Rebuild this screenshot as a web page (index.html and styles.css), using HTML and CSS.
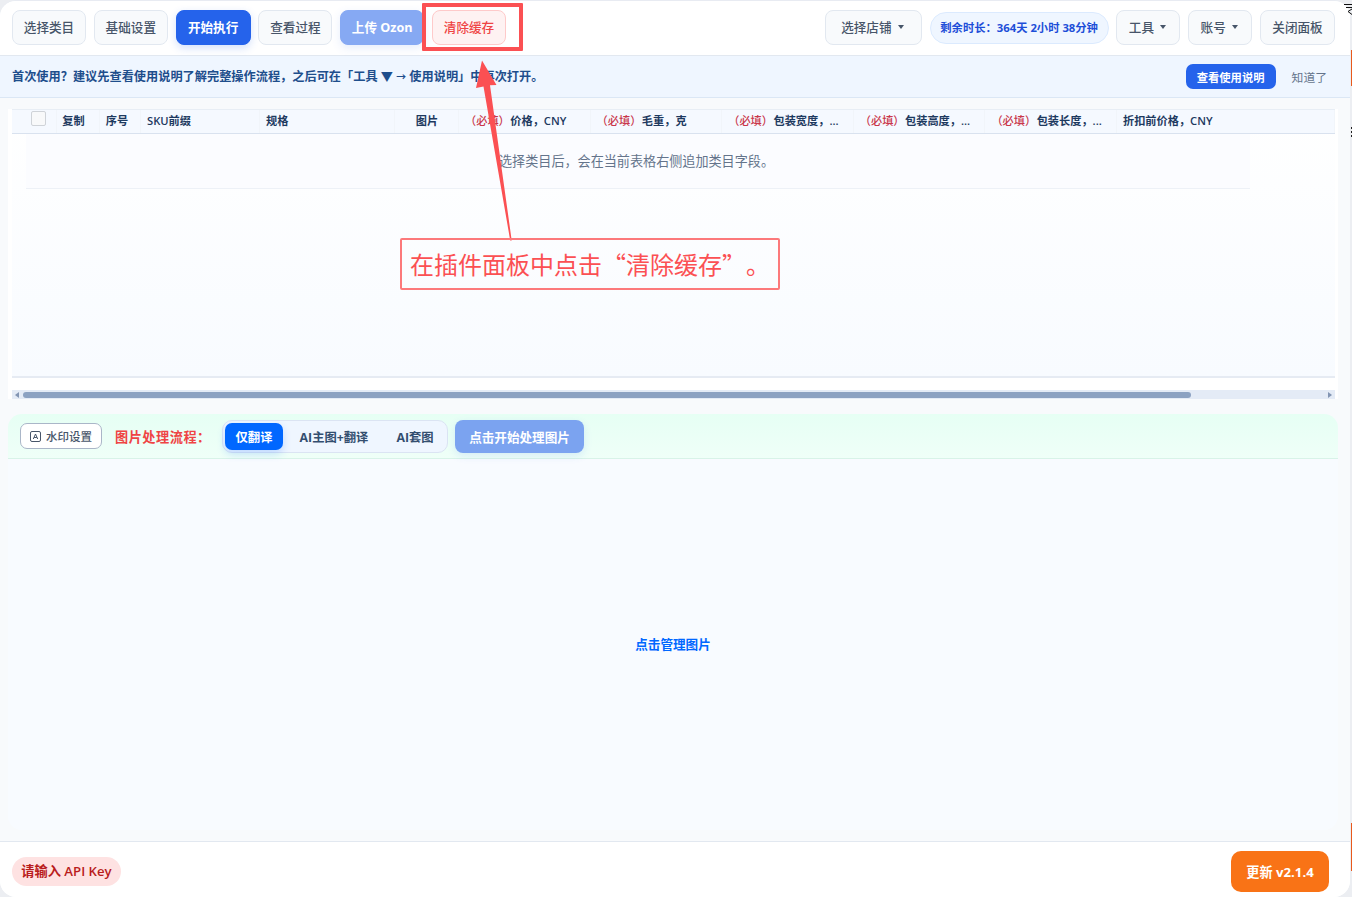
FILE: index.html
```html
<!DOCTYPE html>
<html lang="zh-CN">
<head>
  <meta charset="UTF-8">
  <meta name="viewport" content="width=device-width, initial-scale=1.0">
  <title>Ozon 插件面板</title>
  <link rel="stylesheet" href="styles.css">
</head>
<body>

<span class="edge edge-top"></span>
<span class="edge edge-bottom"></span>
<svg class="edge-mark" width="8" height="12" viewBox="0 0 8 12" fill="none" stroke="#111"><path d="M0 1.500h8M2 4.500h6M8 6 4 8.500l4 3"/></svg>
<span class="edge-dots"></span>

<div class="panel">
  <header class="toolbar">
    <div class="tools">
      <button class="btn">选择类目</button>
      <button class="btn">基础设置</button>
      <button class="btn btn-primary">开始执行</button>
      <button class="btn">查看过程</button>
      <button class="btn btn-primary btn-disabled">上传 Ozon</button>
      <button class="btn btn-danger">清除缓存</button>
    </div>
    <div class="tools">
      <button class="btn btn-drop btn-shop">选择店铺 <i class="caret"></i></button>
      <span class="remain">剩余时长：364天 2小时 38分钟</span>
      <button class="btn btn-drop">工具 <i class="caret"></i></button>
      <button class="btn btn-drop">账号 <i class="caret"></i></button>
      <button class="btn btn-close">关闭面板</button>
    </div>
  </header>

  <div class="notice">
    <span class="notice-text">首次使用？建议先查看使用说明了解完整操作流程，之后可在「工具 ▼ <small>→</small> 使用说明」中再次打开。</span>
    <button class="notice-open">查看使用说明</button>
    <button class="notice-ok">知道了</button>
  </div>

  <main class="content">
    <section class="sheet">
      <div class="sheet-body">
        <div class="sheet-head">
          <span class="center"><i class="checkbox"></i></span>
          <span class="center low copy">复制</span>
          <span class="center low">序号</span>
          <span>SKU前缀</span>
          <span class="low">规格</span>
          <span class="center low pic">图片</span>
          <span><em>（必填）</em>价格，CNY</span>
          <span><em>（必填）</em>毛重，克</span>
          <span><em>（必填）</em>包装宽度，...</span>
          <span><em>（必填）</em>包装高度，...</span>
          <span><em>（必填）</em>包装长度，...</span>
          <span>折扣前价格，CNY</span>
        </div>
        <div class="sheet-empty">选择类目后，会在当前表格右侧追加类目字段。</div>
      </div>
      <div class="scrollbar">
        <svg width="4" height="6" viewBox="0 0 4 6"><path d="M4 0v6L0 3z"/></svg>
        <div class="track"><div class="thumb"></div></div>
        <svg width="4" height="6" viewBox="0 0 4 6"><path d="M0 0v6l4-3z"/></svg>
      </div>
    </section>

    <section class="images">
      <div class="flow">
        <button class="watermark">
          <svg width="11" height="11" viewBox="0 0 11 11" fill="none" stroke="#475569"><rect x=".5" y=".5" width="10" height="10" rx="1.500"/><path d="M3.300 8 5.500 3l2.200 5M4.100 6.500h2.800"/></svg>
          水印设置
        </button>
        <span class="flow-label">图片处理流程：</span>
        <div class="tabs">
          <button class="tab active">仅翻译</button>
          <button class="tab tab-wide">AI主图+翻译</button>
          <button class="tab tab-last">AI套图</button>
        </div>
        <button class="start">点击开始处理图片</button>
      </div>
      <div class="gallery"><a class="manage">点击管理图片</a></div>
    </section>
  </main>

  <footer class="footer">
    <span class="api-key">请输入 API Key</span>
    <button class="update">更新 v2.1.4</button>
  </footer>
</div>

<!-- 操作提示 -->
<div class="mark"></div>
<svg class="arrow" width="40" height="182" viewBox="0 0 40 182"><path d="M7 .5 21.500 25l-6.500.3L36.700 180.500h-1.500L8.500 26.500 1 28z"/></svg>
<div class="tip">在插件面板中点击“清除缓存”。</div>

</body>
</html>
```
FILE: styles.css
```css
:root {
  --primary: #2563eb;
  --line: #e2e8f0;
  --text: #475569;
  --mark: #fb5053;
}

* {
  box-sizing: border-box;
}

body {
  margin: 0;
  height: 897px;
  position: relative;
  overflow: hidden;
  background: #eceef2;
  font-family: "Open Sans", "Noto Sans CJK SC", sans-serif;
  font-size: 12.6px;
  color: var(--text);
  text-spacing-trim: space-all;
}

button {
  margin: 0;
  padding: 0;
  font: inherit;
  color: inherit;
  border: 1px solid var(--line);
  background: #f8fafc;
  white-space: nowrap;
  text-spacing-trim: space-all;
}

.panel {
  width: 1350px;
  height: 897px;
  display: flex;
  flex-direction: column;
  background: #f8fafc;
  border-top: 1px solid #e8ebf2;
  border-radius: 16px;
  overflow: hidden;
}

/* strip of the page behind the panel */
.edge {
  position: absolute;
  right: 0;
  width: 1px;
  background: #e8591c;
}

.edge-top {
  top: 50px;
  height: 36px;
}

.edge-bottom {
  top: 823px;
  height: 48px;
}

.edge-mark {
  position: absolute;
  right: 0;
  top: 3px;
}

.edge-dots {
  position: absolute;
  right: 0;
  top: 127px;
  width: 1px;
  height: 11px;
  background: repeating-linear-gradient(#222 0 2px, #eee 2px 4px);
}

.toolbar {
  height: 55px;
  flex: none;
  padding: 9px 15px 0 12px;
  display: flex;
  justify-content: space-between;
  align-items: flex-start;
  background: #fff;
  border-bottom: 1px solid var(--line);
}

.tools {
  display: flex;
  align-items: center;
  gap: 7.8px;
}

.btn {
  width: 74px;
  height: 35px;
  padding-bottom: 2px;
  border-radius: 8px;
  font-weight: 500;
}

.btn-primary {
  width: 75px;
  color: #fff;
  font-weight: 700;
  background: var(--primary);
  border-color: var(--primary);
  box-shadow: 0 3px 8px rgba(37, 99, 235, 0.2);
}

.btn-disabled {
  width: 84px;
  opacity: 0.55;
}

.btn-danger {
  color: #ef4444;
  background: #fef2f2;
  border-color: #fecaca;
}

.btn-drop {
  width: 64px;
  padding-right: 2px;
  display: flex;
  align-items: center;
  justify-content: center;
  gap: 6px;
}

.btn-shop {
  width: 97px;
}

.btn-close {
  width: 75px;
}

.caret {
  border: 3px solid transparent;
  border-top: 4px solid #475569;
  border-bottom: 0;
}

.remain {
  width: 179px;
  height: 32px;
  line-height: 30px;
  text-align: center;
  white-space: nowrap;
  font-size: 11.3px;
  font-weight: 700;
  color: #1d4ed8;
  background: #eff6ff;
  border: 1px solid #dbeafe;
  border-radius: 16px;
}

.notice {
  height: 42px;
  flex: none;
  display: flex;
  align-items: center;
  padding: 0 23px 0 12px;
  background: #eff6ff;
  border-bottom: 1px solid #dbe7f5;
}

.notice-text {
  flex: 1;
  padding-bottom: 1px;
  font-size: 12.2px;
  font-weight: 600;
  color: #1e4e8c;
}

.notice-text small {
  font-size: 10px;
}

.notice-open {
  width: 90px;
  height: 25px;
  margin-right: 16px;
  font-size: 11.3px;
  font-weight: 700;
  color: #fff;
  background: var(--primary);
  border: 0;
  border-radius: 7px;
}

.notice-ok {
  border: 0;
  padding-bottom: 1px;
  background: none;
  font-size: 11.8px;
  color: #64748b;
}

.content {
  flex: 1;
  padding: 11px 12px 11px 8px;
}

.sheet {
  height: 290px;
  padding: 0 3px 0 4px;
  background: #fff;
  display: flex;
  flex-direction: column;
}

.sheet-body {
  height: 269px;
  background: linear-gradient(#fff, #f8fbff);
  border-bottom: 2px solid #e6ebf3;
}

.sheet-head {
  height: 25px;
  display: grid;
  grid-template-columns: 31px 43px 41px 119px 135px 64px repeat(5, 131.6px) 1fr;
  padding-left: 14px;
  background: #f5f9ff;
  border-top: 1px solid #e8eef5;
  border-bottom: 1px solid #d9e2ef;
  font-size: 11.2px;
  font-weight: 600;
  line-height: 21px;
  color: #1e3a5f;
}

.sheet-head span {
  padding-left: 6px;
  white-space: nowrap;
  border-right: 1px solid #f1f5fa;
}

.sheet-head .center {
  padding: 0 6px 0 0;
  text-align: center;
}

.sheet-head .copy {
  padding-right: 9px;
}

.sheet-head .pic {
  padding: 0 0 0 1px;
}

.sheet-head .low {
  line-height: 22px;
}

.sheet-head em {
  font-style: normal;
  font-weight: 500;
  color: #c9364a;
  margin-right: 0.5px;
}

.checkbox {
  display: block;
  width: 15px;
  height: 15px;
  margin: 1px 0 0 5px;
  border: 1px solid #cfd3d8;
  border-radius: 2px;
  background: #f8f9fa;
}

.sheet-empty {
  width: 1224px;
  height: 55px;
  margin-left: 14px;
  padding-right: 3px;
  line-height: 54px;
  text-align: center;
  font-size: 13.1px;
  color: #64748b;
  background: #fbfcff;
  border-bottom: 1px solid #edf1f7;
}

.scrollbar {
  height: 9px;
  margin-top: 12px;
  padding: 0 3px;
  display: flex;
  align-items: center;
  background: #e4ebf6;
  fill: #8395b3;
}

.track {
  flex: 1;
  padding: 0 4px;
}

.thumb {
  width: 1168px;
  height: 6px;
  border-radius: 3px;
  background: #8ca2c2;
}

.images {
  margin-top: 15px;
}

.flow {
  height: 45px;
  display: flex;
  align-items: center;
  padding: 1px 12px 0;
  background: linear-gradient(#e6fff4, #effff8);
  border-bottom: 1px solid #d8f3e8;
  border-radius: 14px 14px 0 0;
}

.watermark {
  width: 82px;
  height: 26px;
  margin-bottom: 1px;
  display: flex;
  align-items: center;
  justify-content: center;
  gap: 5px;
  font-size: 11.5px;
  font-weight: 500;
  background: #fff;
  border-color: #aab6c8;
  border-radius: 7px;
}

.flow-label {
  width: 107px;
  margin-left: 13px;
  white-space: nowrap;
  font-size: 13.2px;
  letter-spacing: 0.5px;
  font-weight: 600;
  color: #ef4444;
}

.tabs {
  width: 226px;
  height: 33px;
  padding: 2px;
  display: flex;
  background: #eff6ff;
  border: 1px solid #dbe4f3;
  border-radius: 10px;
}

.tab {
  height: 27px;
  padding-top: 1px;
  border: 0;
  background: none;
  font-size: 12.3px;
  font-weight: 700;
  color: #334e6f;
}

.tab.active {
  width: 58px;
  color: #fff;
  background: #0067ff;
  border-radius: 7px;
  box-shadow: 0 4px 8px rgba(0, 103, 255, 0.2);
}

.tab-wide {
  width: 102px;
}

.tab-last {
  width: 60px;
}

.start {
  width: 129px;
  height: 33px;
  margin-left: 7px;
  font-size: 12.6px;
  font-weight: 700;
  color: #fff;
  background: #7ba3f0;
  border: 0;
  border-radius: 8px;
  box-shadow: 0 3px 8px rgba(37, 99, 235, 0.12);
}

.gallery {
  height: 371px;
  padding-bottom: 3px;
  display: flex;
  align-items: center;
  justify-content: center;
  background: #f8fbff;
  border-radius: 0 0 14px 14px;
}

.manage {
  font-size: 12.6px;
  font-weight: 600;
  color: #0067ff;
}

.footer {
  height: 56px;
  flex: none;
  padding: 4px 21px 0 12px;
  display: flex;
  align-items: center;
  justify-content: space-between;
  background: #fff;
  border-top: 1px solid var(--line);
}

.api-key {
  width: 109px;
  height: 29px;
  line-height: 29px;
  text-align: center;
  white-space: nowrap;
  font-size: 13.2px;
  font-weight: 600;
  color: #b91c1c;
  background: #fee2e2;
  border-radius: 15px;
}

.update {
  width: 98px;
  height: 41px;
  font-size: 13.2px;
  font-weight: 700;
  color: #fff;
  background: #f97316;
  border: 0;
  border-radius: 10px;
}

.mark {
  position: absolute;
  left: 422px;
  top: 3px;
  width: 101px;
  height: 48px;
  border: 4px solid var(--mark);
  border-radius: 1px;
}

.arrow {
  position: absolute;
  left: 475px;
  top: 60px;
  fill: var(--mark);
}

.tip {
  position: absolute;
  left: 400px;
  top: 238px;
  width: 380px;
  height: 52px;
  padding-left: 8px;
  border: 2px solid #fc797b;
  border-radius: 2px;
  font-family: "Noto Sans CJK SC", sans-serif;
  font-size: 24px;
  font-weight: 400;
  line-height: 47px;
  white-space: nowrap;
  color: var(--mark);
}
```
